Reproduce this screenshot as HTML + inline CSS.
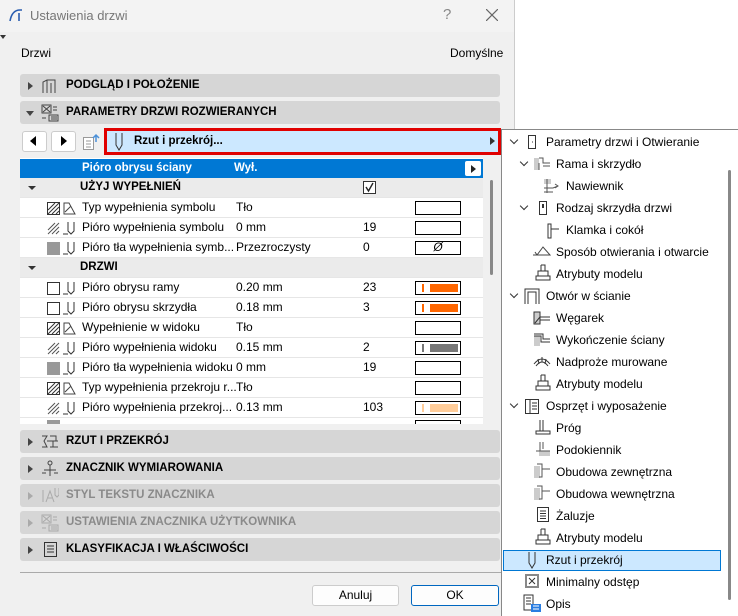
<!DOCTYPE html>
<html><head><meta charset="utf-8"><style>
*{box-sizing:border-box;margin:0;padding:0}
body{width:738px;height:616px;overflow:hidden;background:#f0f0f0;font-family:"Liberation Sans",sans-serif;font-size:12px;color:#000;position:relative}
.a{position:absolute;white-space:nowrap}
.hdr{position:absolute;left:20px;width:480px;height:23px;background:#d6d6d6;border-radius:3px;font-weight:bold;font-size:11.5px;line-height:23px}
.hdr .t{position:absolute;left:46px}
.hdr .tri{position:absolute;left:8px;top:8px;width:0;height:0;border-left:5px solid #444;border-top:4px solid transparent;border-bottom:4px solid transparent}
.hdr .trd{position:absolute;left:6px;top:10px;border-top:5px solid #444;border-left:4px solid transparent;border-right:4px solid transparent}
.hdr.dis{color:#8a8a8a}
.hdr.dis .tri{border-left-color:#aaa}
.row{position:absolute;left:20px;width:463px;height:20px;background:#fff;border-bottom:1px solid #e6e6e6;line-height:19px}
.row span{position:absolute}
.sw{position:absolute;left:395px;top:3px;width:46px;height:14px;border:1px solid #000;background:#fff}
.ic{position:absolute;top:4px}
.m{position:absolute;left:501px;top:129px;width:237px;height:487px;background:#fff;border-left:1px solid #888;border-top:1px solid #888}
.mi{position:absolute;line-height:22px;height:22px;font-size:12px}
.chev{position:absolute;width:6px;height:6px;border-right:1.5px solid #333;border-bottom:1.5px solid #333;transform:rotate(45deg)}
</style></head><body>
<div class="a" style="left:515px;top:0;width:223px;height:616px;background:#fff"></div>
<div class="a" style="left:514px;top:0;width:1px;height:616px;background:#ccc"></div>
<!-- title bar -->
<div class="a" style="left:0;top:0;width:514px;height:32px;background:#f3f3f3"></div>
<svg class="a" style="left:8px;top:7px" width="16" height="16"><path d="M2 14 Q4 3 12 3 L14 3 M11 6 L11 14" stroke="#2a5db0" stroke-width="1.6" fill="none"/></svg>
<div class="a" style="left:30px;top:8px;font-size:13px;color:#777">Ustawienia drzwi</div>
<div class="a" style="left:443px;top:6px;font-size:15px;color:#888">?</div>
<svg class="a" style="left:486px;top:9px" width="12" height="12"><path d="M0 0L12 12M12 0L0 12" stroke="#666" stroke-width="1.2"/></svg>
<div class="a" style="left:0;top:35px;border-top:4px solid #333;border-left:3px solid transparent;border-right:3px solid transparent"></div>
<div class="a" style="left:21px;top:46px">Drzwi</div>
<div class="a" style="left:450px;top:46px">Domyślne</div>

<div class="hdr" style="top:74px"><div class="tri"></div>
<svg class="a" style="left:21px;top:4px" width="16" height="16"><path d="M2 15V4L6 2H14V15M6 2V15M10 5V15M14 5V15" stroke="#444" fill="none"/></svg>
<span class="t">PODGLĄD I POŁOŻENIE</span></div>
<div class="hdr" style="top:101px"><div class="trd"></div>
<svg class="a" style="left:21px;top:3px" width="18" height="18"><rect x="1" y="1" width="9" height="8" fill="none" stroke="#444"/><path d="M2 2L9 8M9 2L2 8M12 3H16M12 6H16M8 11H17V17H8ZM10 13H16M10 15H16M1 14H5" stroke="#444" fill="none"/></svg>
<span class="t">PARAMETRY DRZWI ROZWIERANYCH</span></div>

<!-- toolbar -->
<div class="a" style="left:22px;top:131px;width:25px;height:21px;background:#fff;border:1px solid #ccc;border-radius:3px"></div>
<div class="a" style="left:30px;top:136px;border-right:6px solid #000;border-top:5px solid transparent;border-bottom:5px solid transparent"></div>
<div class="a" style="left:51px;top:131px;width:25px;height:21px;background:#fff;border:1px solid #ccc;border-radius:3px"></div>
<div class="a" style="left:61px;top:136px;border-left:6px solid #000;border-top:5px solid transparent;border-bottom:5px solid transparent"></div>
<svg class="a" style="left:82px;top:133px" width="18" height="18"><rect x="1.5" y="4.5" width="10" height="12" fill="#fff" stroke="#999"/><path d="M4 8H9M4 11H9M4 14H9" stroke="#999"/><path d="M14 9V2M11 5L14 2L17 5" stroke="#4a90d9" stroke-width="1.5" fill="none"/></svg>

<!-- table -->
<div class="a" style="left:20px;top:158px;width:463px;height:266px;background:#fff"></div>
<div class="a" style="left:20px;top:159px;width:463px;height:19px;background:#0078d4;color:#fff;font-weight:bold;font-size:11.5px;line-height:19px"><span class="a" style="left:62px">Pióro obrysu ściany</span><span class="a" style="left:214px">Wył.</span>
<div class="a" style="left:445px;top:2px;width:16px;height:15px;background:#fff;border-radius:2px"></div><div class="a" style="left:451px;top:6px;border-left:5px solid #222;border-top:4px solid transparent;border-bottom:4px solid transparent"></div></div>
<div class="row" style="top:178px;background:#ebebeb;font-weight:bold;font-size:11.5px"><div class="a" style="left:8px;top:8px;border-top:4px solid #333;border-left:4px solid transparent;border-right:4px solid transparent"></div><span style="left:60px">UŻYJ WYPEŁNIEŃ</span>
<svg class="a" style="left:343px;top:3px" width="13" height="13"><rect x=".5" y=".5" width="12" height="12" fill="#fff" stroke="#333"/><path d="M3 6L5.5 10L10 2" stroke="#222" stroke-width="1.4" fill="none"/></svg></div>

<div class="row" style="top:198px"><svg class="ic" style="left:27px" width="30" height="13"><rect x=".5" y=".5" width="12" height="12" fill="#fff" stroke="#333"/><path d="M1 8L8 1M1 12L12 1M5 12L12 5M9 12L12 9" stroke="#333"/><path d="M17 1H22L28 12H17ZM18 10L24 4" stroke="#444" fill="none"/></svg><span style="left:62px">Typ wypełnienia symbolu</span><span style="left:216px">Tło</span><div class="sw"></div></div>
<div class="row" style="top:218px"><svg class="ic" style="left:27px" width="30" height="13"><path d="M1 8L8 1M1 12L12 1M5 12L12 5M9 12L12 9" stroke="#555"/><path d="M21 0V9L24 12L27 9V0M16 12H21" stroke="#333" fill="none"/></svg><span style="left:62px">Pióro wypełnienia symbolu</span><span style="left:216px">0 mm</span><span style="left:343px">19</span><div class="sw"></div></div>
<div class="row" style="top:238px"><svg class="ic" style="left:27px" width="30" height="13"><rect width="13" height="13" fill="#999"/><path d="M21 0V9L24 12L27 9V0M16 12H21" stroke="#333" fill="none"/></svg><span style="left:62px">Pióro tła wypełnienia symb...</span><span style="left:216px">Przezroczysty</span><span style="left:343px">0</span><div class="sw" style="text-align:center;line-height:11px;font-style:italic">Ø</div></div>
<div class="row" style="top:258px;background:#ebebeb;font-weight:bold;font-size:11.5px"><div class="a" style="left:8px;top:8px;border-top:4px solid #333;border-left:4px solid transparent;border-right:4px solid transparent"></div><span style="left:60px">DRZWI</span></div>
<div class="row" style="top:278px"><svg class="ic" style="left:27px" width="30" height="13"><rect x=".5" y=".5" width="12" height="12" fill="#fff" stroke="#333"/><path d="M21 0V9L24 12L27 9V0M16 12H21" stroke="#333" fill="none"/></svg><span style="left:62px">Pióro obrysu ramy</span><span style="left:216px">0.20 mm</span><span style="left:343px">23</span><div class="sw"><div class="a" style="left:6px;top:2px;width:2px;height:8px;background:#f60"></div><div class="a" style="left:14px;top:2px;width:28px;height:8px;background:#f60"></div></div></div>
<div class="row" style="top:298px"><svg class="ic" style="left:27px" width="30" height="13"><rect x=".5" y=".5" width="12" height="12" fill="#fff" stroke="#333"/><path d="M21 0V9L24 12L27 9V0M16 12H21" stroke="#333" fill="none"/></svg><span style="left:62px">Pióro obrysu skrzydła</span><span style="left:216px">0.18 mm</span><span style="left:343px">3</span><div class="sw"><div class="a" style="left:6px;top:2px;width:2px;height:8px;background:#f60"></div><div class="a" style="left:14px;top:2px;width:28px;height:8px;background:#f60"></div></div></div>
<div class="row" style="top:318px"><svg class="ic" style="left:27px" width="30" height="13"><rect x=".5" y=".5" width="12" height="12" fill="#fff" stroke="#333"/><path d="M1 8L8 1M1 12L12 1M5 12L12 5M9 12L12 9" stroke="#333"/><path d="M17 1H22L28 12H17ZM18 10L24 4" stroke="#444" fill="none"/></svg><span style="left:62px">Wypełnienie w widoku</span><span style="left:216px">Tło</span><div class="sw"></div></div>
<div class="row" style="top:338px"><svg class="ic" style="left:27px" width="30" height="13"><path d="M1 8L8 1M1 12L12 1M5 12L12 5M9 12L12 9" stroke="#555"/><path d="M21 0V9L24 12L27 9V0M16 12H21" stroke="#333" fill="none"/></svg><span style="left:62px">Pióro wypełnienia widoku</span><span style="left:216px">0.15 mm</span><span style="left:343px">2</span><div class="sw"><div class="a" style="left:6px;top:2px;width:2px;height:8px;background:#777"></div><div class="a" style="left:14px;top:2px;width:28px;height:8px;background:#777"></div></div></div>
<div class="row" style="top:358px"><svg class="ic" style="left:27px" width="30" height="13"><rect width="13" height="13" fill="#999"/><path d="M21 0V9L24 12L27 9V0M16 12H21" stroke="#333" fill="none"/></svg><span style="left:62px">Pióro tła wypełnienia widoku</span><span style="left:216px">0 mm</span><span style="left:343px">19</span><div class="sw"></div></div>
<div class="row" style="top:378px"><svg class="ic" style="left:27px" width="30" height="13"><rect x=".5" y=".5" width="12" height="12" fill="#fff" stroke="#333"/><path d="M1 8L8 1M1 12L12 1M5 12L12 5M9 12L12 9" stroke="#333"/><path d="M17 1H22L28 12H17ZM18 10L24 4" stroke="#444" fill="none"/></svg><span style="left:62px">Typ wypełnienia przekroju r...</span><span style="left:216px">Tło</span><div class="sw"></div></div>
<div class="row" style="top:398px"><svg class="ic" style="left:27px" width="30" height="13"><path d="M1 8L8 1M1 12L12 1M5 12L12 5M9 12L12 9" stroke="#555"/><path d="M21 0V9L24 12L27 9V0M16 12H21" stroke="#333" fill="none"/></svg><span style="left:62px">Pióro wypełnienia przekroj...</span><span style="left:216px">0.13 mm</span><span style="left:343px">103</span><div class="sw"><div class="a" style="left:6px;top:2px;width:2px;height:8px;background:#fc9"></div><div class="a" style="left:14px;top:2px;width:28px;height:8px;background:#fc9"></div></div></div>
<div class="a" style="left:20px;top:418px;width:463px;height:6px;background:#fff;overflow:hidden"><div class="a" style="left:27px;top:2px;width:13px;height:6px;background:#999"></div><div class="a" style="left:395px;top:2px;width:46px;height:6px;border:1px solid #000"></div></div>
<div class="a" style="left:490px;top:180px;width:3px;height:95px;background:#888;border-radius:2px"></div>

<div class="hdr" style="top:430px"><div class="tri"></div><svg class="a" style="left:21px;top:5px" width="18" height="14"><path d="M1 1H6L3 6L6 12H1M6 6H17M9 1H15V6M12 6V12M9 12H17" stroke="#444" fill="none"/></svg><span class="t">RZUT I PRZEKRÓJ</span></div>
<div class="hdr" style="top:457px"><div class="tri"></div><svg class="a" style="left:21px;top:3px" width="18" height="17"><circle cx="9" cy="3" r="2" fill="none" stroke="#444"/><path d="M9 5V16M3 10H15M1 13H5M13 13H17" stroke="#444" fill="none"/></svg><span class="t">ZNACZNIK WYMIAROWANIA</span></div>
<div class="hdr dis" style="top:484px"><div class="tri"></div><svg class="a" style="left:21px;top:3px" width="18" height="17"><path d="M2 3V15M5 15L9 4L13 15M7 11H11M14 1V8L16 10L18 8V1" stroke="#aaa" fill="none"/></svg><span class="t">STYL TEKSTU ZNACZNIKA</span></div>
<div class="hdr dis" style="top:511px"><div class="tri"></div><svg class="a" style="left:21px;top:3px" width="18" height="18"><rect x="1" y="1" width="9" height="8" fill="none" stroke="#aaa"/><path d="M2 2L9 8M9 2L2 8M12 3H16M12 6H16M8 11H17V17H8ZM10 13H16M10 15H16M1 14H5" stroke="#aaa" fill="none"/></svg><span class="t">USTAWIENIA ZNACZNIKA UŻYTKOWNIKA</span></div>
<div class="hdr" style="top:538px"><div class="tri"></div><svg class="a" style="left:24px;top:4px" width="14" height="16"><rect x=".5" y=".5" width="12" height="14" fill="none" stroke="#333"/><path d="M3 4H10M3 7H10M3 10H10" stroke="#333"/></svg><span class="t">KLASYFIKACJA I WŁAŚCIWOŚCI</span></div>

<div class="a" style="left:20px;top:572px;width:481px;height:1px;background:#aaa"></div>
<div class="a" style="left:312px;top:585px;width:87px;height:21px;background:#fdfdfd;border:1px solid #ccc;border-radius:3px;text-align:center;line-height:19px">Anuluj</div>
<div class="a" style="left:411px;top:585px;width:88px;height:21px;background:#fdfdfd;border:1px solid #0067c0;border-radius:3px;text-align:center;line-height:19px">OK</div>

<!-- popup menu -->
<div class="m">
<div class="a" style="left:226px;top:40px;width:3px;height:430px;background:#888;border-radius:2px"></div>
<div class="a" style="left:1px;top:420px;width:218px;height:21px;background:#cce8ff;border:1px solid #0078d4"></div>
</div>
<div class="a" style="left:104px;top:128px;width:397px;height:27px;border:3px solid #e00000;background:#cce8ff"></div>
<svg class="a" style="left:114px;top:132px" width="10" height="20"><path d="M2 1V13L5 18L8 13V1" stroke="#333" fill="none"/></svg>
<div class="a" style="left:134px;top:135px;font-weight:bold;font-size:11.5px">Rzut i przekrój...</div>
<div class="a" style="left:490px;top:137px;border-left:5px solid #333;border-top:4px solid transparent;border-bottom:4px solid transparent"></div>

<div class="chev" style="left:511px;top:137px"></div>
<svg class="a" style="left:528px;top:135px" width="8" height="14"><rect x=".5" y=".5" width="7" height="13" fill="none" stroke="#333"/><path d="M4 7h1" stroke="#333"/></svg>
<div class="mi" style="left:546px;top:131px">Parametry drzwi i Otwieranie</div>
<div class="chev" style="left:521px;top:159px"></div>
<svg class="a" style="left:533px;top:157px" width="18" height="14"><path d="M1 1H6V13H1Z" fill="#ccc"/><path d="M6 1H10V6H17M6 6V13M10 9H17" stroke="#555" fill="none"/></svg>
<div class="mi" style="left:556px;top:153px">Rama i skrzydło</div>
<svg class="a" style="left:543px;top:178px" width="18" height="16"><path d="M1 1H8V6H1Z" fill="#ccc"/><path d="M4 1V15M1 10H10L15 8M12 6L15 8L12 10M1 14H10" stroke="#555" fill="none"/></svg>
<div class="mi" style="left:566px;top:175px">Nawiewnik</div>
<div class="chev" style="left:521px;top:203px"></div>
<svg class="a" style="left:539px;top:201px" width="8" height="14"><rect x=".5" y=".5" width="7" height="13" fill="none" stroke="#333"/><rect x="3" y="3" width="2" height="4" fill="#333"/></svg>
<div class="mi" style="left:556px;top:197px">Rodzaj skrzydła drzwi</div>
<svg class="a" style="left:545px;top:223px" width="16" height="16"><path d="M3 1H6V15H3ZM6 6H14" stroke="#333" fill="none"/></svg>
<div class="mi" style="left:566px;top:219px">Klamka i cokół</div>
<svg class="a" style="left:533px;top:245px" width="18" height="12"><path d="M0 10H4L10 2L17 10H4M2 7L4 10" stroke="#444" fill="none"/></svg>
<div class="mi" style="left:556px;top:241px">Sposób otwierania i otwarcie</div>
<svg class="a" style="left:535px;top:264px" width="16" height="18"><path d="M6 1H10V7M6 1V7M3 7H13V12H3ZM1 12H15V16H1Z" stroke="#333" fill="none"/></svg>
<div class="mi" style="left:556px;top:263px">Atrybuty modelu</div>
<div class="chev" style="left:511px;top:291px"></div>
<svg class="a" style="left:524px;top:288px" width="16" height="16"><path d="M1 16V1H15V16M4 16V4H12V16" stroke="#333" fill="none"/></svg>
<div class="mi" style="left:546px;top:285px">Otwór w ścianie</div>
<svg class="a" style="left:533px;top:311px" width="18" height="14"><rect x="1" y="1" width="6" height="12" fill="#ccc" stroke="#333"/><path d="M2 12L7 6M7 6H17M7 9H17" stroke="#333"/></svg>
<div class="mi" style="left:556px;top:307px">Węgarek</div>
<svg class="a" style="left:533px;top:333px" width="18" height="14"><rect x="1" y="3" width="6" height="10" fill="#ccc"/><path d="M1 1H10V6H17M1 3H8V9H17" stroke="#333" fill="none"/></svg>
<div class="mi" style="left:556px;top:329px">Wykończenie ściany</div>
<svg class="a" style="left:533px;top:355px" width="18" height="12"><path d="M1 9Q9 -1 17 9M3 11Q9 3 15 11M5 4L6 9M9 2V7M13 4L12 9" stroke="#333" fill="none"/></svg>
<div class="mi" style="left:556px;top:351px">Nadproże murowane</div>
<svg class="a" style="left:535px;top:374px" width="16" height="18"><path d="M6 1H10V7M6 1V7M3 7H13V12H3ZM1 12H15V16H1Z" stroke="#333" fill="none"/></svg>
<div class="mi" style="left:556px;top:373px">Atrybuty modelu</div>
<div class="chev" style="left:511px;top:401px"></div>
<svg class="a" style="left:525px;top:399px" width="14" height="16"><rect x=".5" y=".5" width="13" height="14" fill="none" stroke="#333"/><path d="M5 1V15M7 4H12M7 7H12M7 10H12" stroke="#333"/></svg>
<div class="mi" style="left:546px;top:395px">Osprzęt i wyposażenie</div>
<svg class="a" style="left:535px;top:419px" width="16" height="16"><path d="M5 1V12M8 1V12M1 12H15V15H1Z" stroke="#333" fill="none"/></svg>
<div class="mi" style="left:556px;top:417px">Próg</div>
<svg class="a" style="left:535px;top:441px" width="16" height="16"><rect x="4" y="10" width="11" height="5" fill="#ccc"/><path d="M5 1V10M8 1V8M1 10H15" stroke="#555" fill="none"/></svg>
<div class="mi" style="left:556px;top:439px">Podokiennik</div>
<svg class="a" style="left:533px;top:463px" width="18" height="16"><rect x="1" y="3" width="6" height="12" fill="#ccc"/><path d="M4 1H9V14H6M9 6H17" stroke="#555" fill="none"/></svg>
<div class="mi" style="left:556px;top:461px">Obudowa zewnętrzna</div>
<svg class="a" style="left:533px;top:485px" width="18" height="16"><rect x="1" y="3" width="6" height="12" fill="#ccc"/><path d="M4 1H9V14H6M9 6H17" stroke="#555" fill="none"/></svg>
<div class="mi" style="left:556px;top:483px">Obudowa wewnętrzna</div>
<svg class="a" style="left:537px;top:507px" width="12" height="16"><rect x=".5" y=".5" width="11" height="14" fill="none" stroke="#333"/><path d="M3 4H9M3 6.5H9M3 9H9M3 11.5H9" stroke="#333"/></svg>
<div class="mi" style="left:556px;top:505px">Żaluzje</div>
<svg class="a" style="left:535px;top:528px" width="16" height="18"><path d="M6 1H10V7M6 1V7M3 7H13V12H3ZM1 12H15V16H1Z" stroke="#333" fill="none"/></svg>
<div class="mi" style="left:556px;top:527px">Atrybuty modelu</div>
<svg class="a" style="left:527px;top:551px" width="10" height="18"><path d="M2 1V12L5 17L8 12V1" stroke="#333" fill="none"/></svg>
<div class="mi" style="left:546px;top:549px">Rzut i przekrój</div>
<svg class="a" style="left:525px;top:574px" width="14" height="14"><rect width="14" height="14" fill="#888"/><rect x="2" y="2" width="10" height="10" fill="#fff"/><path d="M4 4L10 10M10 4L4 10" stroke="#333"/></svg>
<div class="mi" style="left:546px;top:571px">Minimalny odstęp</div>
<svg class="a" style="left:523px;top:594px" width="18" height="18"><path d="M1 1H10V16H1Z" fill="none" stroke="#333"/><path d="M3 4H8M3 7H8M3 10H8" stroke="#333"/><rect x="8" y="10" width="10" height="8" fill="#2a7de1"/><path d="M10 12H16M10 15H16" stroke="#fff"/></svg>
<div class="mi" style="left:546px;top:593px">Opis</div>
</body></html>
